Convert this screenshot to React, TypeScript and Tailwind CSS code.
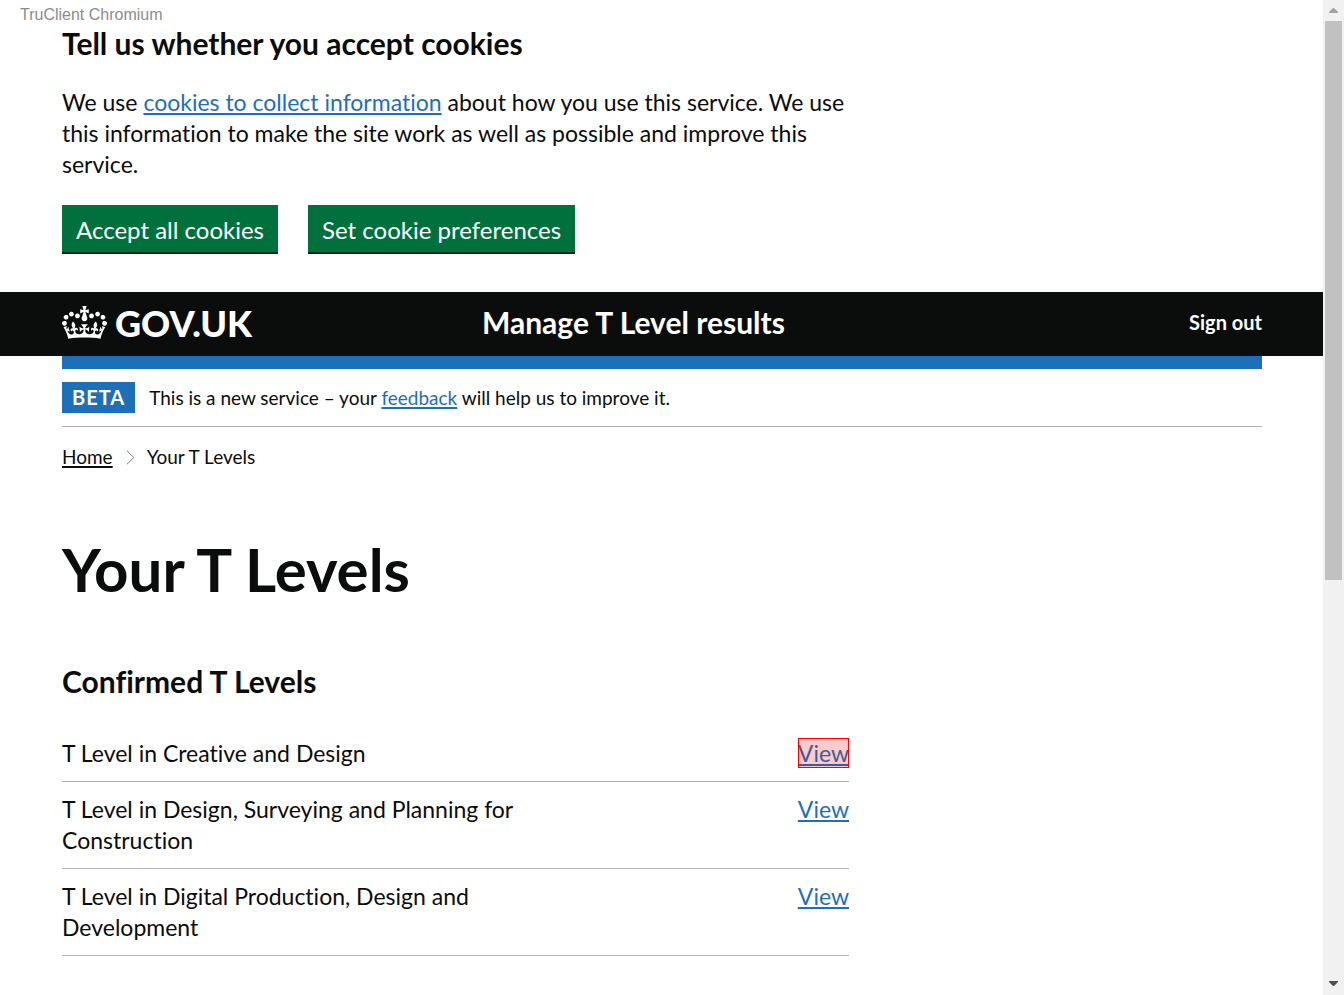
import React from "react";

const linkClass =
  "text-[#1d70b8] underline decoration-2 underline-offset-2 hover:text-[#003078]";

const buttonClass =
  "h-[49px] border-b-2 border-[#002d18] bg-[#00703c] px-[14px] pt-[2px] text-[24px] whitespace-nowrap text-white";

const confirmedLevels = [
  { name: "T Level in Creative and Design", highlighted: true },
  { name: "T Level in Design, Surveying and Planning for Construction", highlighted: false },
  { name: "T Level in Digital Production, Design and Development", highlighted: false },
];

function Crown() {
  return (
    <svg
      className="h-[33px] w-[45px] shrink-0"
      viewBox="0 0 132 97"
      fill="currentColor"
      aria-hidden="true"
    >
      <path
        fillRule="evenodd"
        d="M25 30.2c3.5 1.5 7.7-.2 9.1-3.7 1.5-3.6-.2-7.8-3.9-9.2-3.6-1.4-7.6.3-9.1 3.9-1.4 3.5.3 7.5 3.9 9zM9 39.5c3.6 1.5 7.8-.2 9.2-3.7 1.5-3.6-.2-7.8-3.9-9.1-3.6-1.5-7.6.2-9.1 3.8-1.4 3.5.3 7.5 3.8 9zM4.4 57.2c3.5 1.5 7.7-.2 9.1-3.8 1.5-3.6-.2-7.7-3.9-9.1-3.5-1.5-7.6.3-9.1 3.8-1.4 3.5.3 7.6 3.9 9.1zm38.3-21.4c3.5 1.5 7.7-.2 9.1-3.8 1.5-3.6-.2-7.7-3.9-9.1-3.6-1.5-7.6.3-9.1 3.8-1.3 3.6.4 7.7 3.9 9.1zm64.4-5.6c-3.6 1.5-7.8-.2-9.1-3.7-1.5-3.6.2-7.8 3.8-9.2 3.6-1.4 7.7.3 9.2 3.9 1.3 3.5-.4 7.5-3.9 9zm15.9 9.3c-3.6 1.5-7.7-.2-9.1-3.7-1.5-3.6.2-7.8 3.7-9.1 3.6-1.5 7.7.2 9.2 3.8 1.5 3.5-.3 7.5-3.8 9zm4.7 17.7c-3.6 1.5-7.8-.2-9.2-3.8-1.5-3.6.2-7.7 3.9-9.1 3.6-1.5 7.7.3 9.2 3.8 1.3 3.5-.4 7.6-3.9 9.1zM89.3 35.8c-3.6 1.5-7.8-.2-9.2-3.8-1.4-3.6.2-7.7 3.9-9.1 3.6-1.5 7.7.3 9.2 3.8 1.4 3.6-.3 7.7-3.9 9.1zM69.7 17.7l8.9 4.7V9.3l-8.9 2.8c-.2-.3-.5-.6-.9-.9L72.4 0H59.6l3.5 11.2c-.3.3-.6.5-.9.9l-8.8-2.8v13.1l8.8-4.7c.3.3.6.7.9.9l-5 15.4v.1c-.2.8-.4 1.6-.4 2.4 0 4.1 3.1 7.5 7 8.1h.2c.3 0 .7.1 1 .1.4 0 .7 0 1-.1h.2c4-.6 7.1-4.1 7.1-8.1 0-.8-.1-1.7-.4-2.4V34l-5.1-15.4c.4-.2.7-.6 1-.9zM66 92.8c16.9 0 32.8 1.1 47.1 3.2 4-16.9 8.9-26.7 14-33.5l-9.6-3.4c1 4.9 1.1 7.2 0 10.2-1.5-1.4-3-4.3-4.2-8.7L108.6 76c2.8-2 5-3.2 7.5-3.3-4.4 9.4-10 11.9-13.6 11.2-4.3-.8-6.3-4.6-5.6-7.9 1-4.7 5.7-5.9 8-.5 4.3-8.7-3-11.4-7.6-8.8 7.1-7.2 7.9-13.5 2.1-21.1-8 6.1-8.1 12.3-4.5 20.8-4.7-5.4-12.1-2.5-9.5 6.2 3.4-5.2 7.9-2 7.2 3.1-.6 4.3-6.4 7.8-13.5 7.2-10.3-.9-10.9-8-11.2-13.8 2.5-.5 7.1 1.8 11 7.3L80.2 60c-4.1 4.4-8 5.3-12.3 5.4 1.4-4.4 8-11.6 8-11.6H55.5s6.4 7.2 7.9 11.6c-4.2-.1-8-1-12.3-5.4l1.4 16.4c3.9-5.5 8.5-7.7 10.9-7.3-.3 5.8-.9 12.8-11.1 13.8-7.2.6-12.9-2.9-13.5-7.2-.7-5 3.8-8.3 7.1-3.1 2.7-8.7-4.6-11.6-9.4-6.2 3.7-8.5 3.6-14.7-4.6-20.8-5.8 7.6-5 13.9 2.2 21.1-4.7-2.6-11.9.1-7.7 8.8 2.3-5.5 7.1-4.2 8.1.5.7 3.3-1.3 7.1-5.7 7.9-3.5.7-9-1.8-13.5-11.2 2.5.1 4.7 1.3 7.5 3.3l-4.7-15.4c-1.2 4.4-2.7 7.2-4.3 8.7-1.1-3-.9-5.3 0-10.2l-9.5 3.4c5 6.9 9.9 16.7 14 33.5 14.8-2.1 30.8-3.2 47.7-3.2z"
      />
    </svg>
  );
}

function CookieBanner() {
  return (
    <section className="mr-[61px] ml-[62px] max-w-[1200px] pt-6 pb-[38px]" aria-label="Cookies">
      <div className="w-2/3">
        <h2 className="text-[30px] leading-[38px] font-bold">Tell us whether you accept cookies</h2>
        <p className="mt-[25px]">
          We use{" "}
          <a href="#cookies" className={linkClass}>
            cookies to collect information
          </a>{" "}
          about how you use this service. We use this information to make the site work as well as
          possible and improve this service.
        </p>
      </div>
      <div className="mt-[25px] flex gap-[30px]">
        <button type="button" className={buttonClass}>
          Accept all cookies
        </button>
        <button type="button" className={buttonClass}>
          Set cookie preferences
        </button>
      </div>
    </section>
  );
}

function Header() {
  return (
    <header className="bg-[#0b0c0c] pr-[61px] pl-[62px] font-bold text-white">
      <div className="grid h-16 max-w-[1200px] grid-cols-[35%_1fr_auto] items-center pb-[3px]">
        <a href="#gov" className="flex items-center gap-2 text-[36px] leading-[36px] font-black">
          <Crown />
          GOV.UK
        </a>
        <a href="#service" className="text-[30px]">
          Manage T Level results
        </a>
        <a href="#signout" className="text-[20px]">
          Sign out
        </a>
      </div>
    </header>
  );
}

function Scrollbar() {
  return (
    <div
      className="sticky top-0 flex h-screen w-[21px] shrink-0 flex-col items-center bg-[#f1f1f1]"
      aria-hidden="true"
    >
      <div className="flex h-[21px] items-center">
        <svg className="h-[5px] w-[9px]" viewBox="0 0 9 5" fill="#a3a3a3">
          <path d="M4 0h1l4 4v1H0V4z" />
        </svg>
      </div>
      <div className="flex w-[17px] grow flex-col">
        <div className="h-10/17 bg-[#c1c1c1]" />
      </div>
      <div className="flex h-6 items-center">
        <svg className="h-[5px] w-[9px]" viewBox="0 0 9 5" fill="#505050">
          <path d="M0 0h9v1L5 5H4L0 1z" />
        </svg>
      </div>
    </div>
  );
}

export default function App() {
  return (
    <div className="relative flex min-h-screen bg-white font-[Lato,sans-serif] text-[23px] leading-[31px] text-[#0b0c0c] [font-variant-ligatures:no-common-ligatures]">
      <span className="absolute top-[5px] left-5 font-['Liberation_Sans',sans-serif] text-[16px] leading-5 text-[#8c8c8c]">
        TruClient Chromium
      </span>
      <div className="min-w-0 grow">
        <CookieBanner />
        <Header />
        <div className="mr-[61px] ml-[62px] max-w-[1200px]">
          <div className="h-[13px] bg-[#1d70b8]" />
          <div className="flex items-center gap-[14px] border-b border-[#b1b4b6] py-[13px] text-[19px]">
            <strong className="bg-[#1d70b8] px-[10px] text-[20px] tracking-[1px] text-white">
              BETA
            </strong>
            <p>
              This is a new service – your{" "}
              <a href="#feedback" className={linkClass}>
                feedback
              </a>{" "}
              will help us to improve it.
            </p>
          </div>
          <nav aria-label="Breadcrumb" className="mt-[14px] text-[19px]">
            <ol className="flex items-center">
              <li>
                <a href="#home" className="underline decoration-2 underline-offset-2">
                  Home
                </a>
              </li>
              <li className="flex items-center">
                <svg
                  className="mt-[2px] mr-3 ml-[13px] h-[15px] w-[9px]"
                  viewBox="0 0 9 15"
                  fill="none"
                  stroke="#6f777b"
                  aria-hidden="true"
                >
                  <path d="M1 .8l6.8 6.7L1 14.2" />
                </svg>
                Your T Levels
              </li>
            </ol>
          </nav>
          <main className="w-2/3 pr-[13px]">
            <h1 className="mt-[66px] text-[60px] leading-[62px] font-bold">Your T Levels</h1>
            <h2 className="mt-[62px] text-[30px] leading-[38px] font-bold">Confirmed T Levels</h2>
            <table className="mt-[26px] w-full table-fixed border-collapse text-left">
              <tbody>
                {confirmedLevels.map(({ name, highlighted }) => (
                  <tr key={name} className="border-b border-[#b1b4b6] align-top">
                    <th scope="row" className="w-[64%] py-3 font-normal">
                      {name}
                    </th>
                    <td className="py-3 text-right">
                      <a href="#view" className={`relative inline-block ${linkClass}`}>
                        View
                        {highlighted && (
                          <span className="absolute inset-x-0 top-0 bottom-px border border-[#ff0000] bg-[#dc0000]/20" />
                        )}
                      </a>
                    </td>
                  </tr>
                ))}
              </tbody>
            </table>
          </main>
        </div>
      </div>
      <Scrollbar />
    </div>
  );
}
